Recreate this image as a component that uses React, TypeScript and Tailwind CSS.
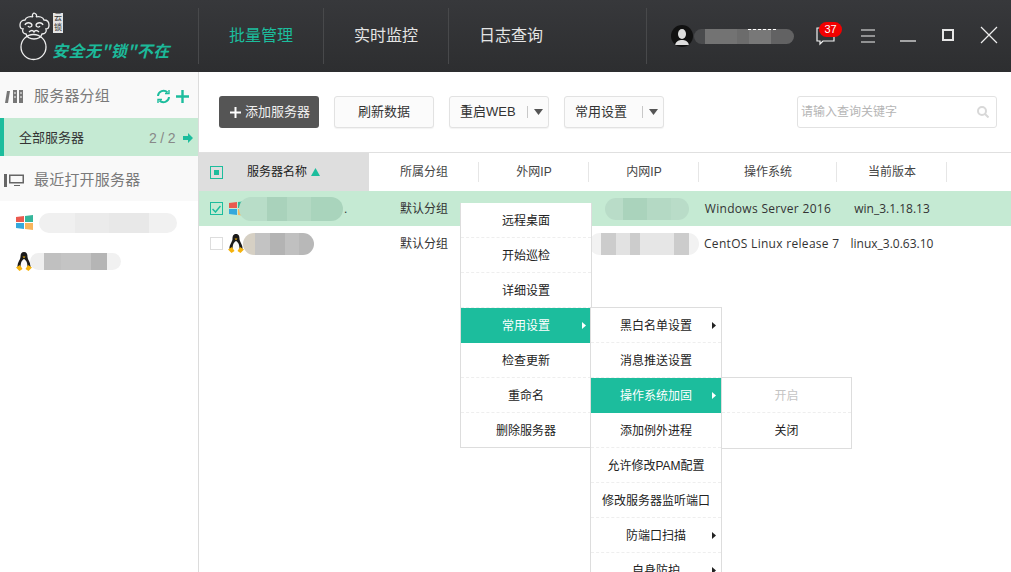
const font = "font-['Liberation_Sans','Noto_Sans_CJK_SC',sans-serif]";

const menu1 = ["远程桌面", "开始巡检", "详细设置", "常用设置", "检查更新", "重命名", "删除服务器"];
const menu2 = ["黑白名单设置", "消息推送设置", "操作系统加固", "添加例外进程", "允许修改PAM配置", "修改服务器监听端口", "防端口扫描", "自身防护"];
const menu2Arrows = ["黑白名单设置", "操作系统加固", "防端口扫描", "自身防护"];

function Logo() {
  return (
    <div className="relative w-[198px] h-full shrink-0">
      <svg className="absolute left-[18px] top-[12px]" width="34" height="49" viewBox="0 0 34 49" fill="none" stroke="#efefef" strokeWidth="1.3">
        <path d="M16 1c-2 1-2 3-1 4-3-1-7 0-8 3-3 0-5 2-5 5 0 2 1 4 3 4-1 2 0 5 3 5 1 3 4 5 8 5s7-2 8-5c3 0 5-2 4-5 2 0 3-2 3-4 0-3-2-5-5-5-1-3-5-4-8-3 1-1 1-3-2-4z" />
        <path d="M7 13c1-3 6-3 7 0 0 2-3 3-4 1M25 13c-1-3-6-3-7 0 0 2 3 3 4 1M11 20c2-2 4-2 5 0 1-2 3-2 5 0" />
        <circle cx="15.500" cy="35" r="12.500" />
      </svg>
      <div className={`absolute left-[53px] top-[13px] w-[10px] h-[20px] bg-[#e4e4e4] text-[#333] text-[8px] leading-[10px] text-center overflow-hidden ${font}`}>
        云锁
      </div>
      <div className="absolute left-[52px] top-[40px] text-[16px] leading-[20px] font-bold italic text-[#1cb99a] whitespace-nowrap tracking-[0.4px] font-['Noto_Sans_CJK_SC',sans-serif]">
        安全无"锁"不在
      </div>
    </div>
  );
}

function HeaderIcons() {
  return (
    <div className="flex items-center h-full">
      <div className="w-[22px] h-[22px] rounded-full bg-[#111] overflow-hidden ml-[24px] flex items-center justify-center shrink-0">
        <svg width="22" height="22" viewBox="0 0 22 22" fill="#ddd">
          <ellipse cx="11" cy="9" rx="4" ry="5" />
          <path d="M4 20c1-4 4-5 7-5s6 1 7 5z" />
        </svg>
      </div>
      <div className="relative flex w-[100px] h-[15px] ml-[1px] rounded-full overflow-hidden">
        <div className="w-[11px] bg-[#4a4b4d]" />
        <div className="w-[32px] bg-[#737373]" />
        <div className="w-[12px] bg-[#6c6c6c]" />
        <div className="w-[22px] bg-[#787878]" />
        <div className="w-[23px] bg-[#626263]" />
        <div className="absolute left-[54px] top-0 w-[28px] border-t border-dashed border-white" />
      </div>
      <div className="relative w-[24px] h-[24px] ml-[20px]">
        <svg className="absolute left-[2px] top-[3px]" width="20" height="20" viewBox="0 0 20 20" fill="none" stroke="#f2f2f2" strokeWidth="1.2">
          <path d="M1 1h17v13H7l-3 3v-3H1z" />
        </svg>
        <span className={`absolute left-[5px] top-[-2px] w-[23px] h-[15px] rounded-full bg-[#f20000] text-white text-[11px] leading-[15px] text-center ${font}`}>
          37
        </span>
      </div>
      <svg className="ml-[22px]" width="16" height="14" viewBox="0 0 16 14" stroke="#f2f2f2" strokeWidth="1.2">
        <path d="M1 1h14M1 7h14M1 13h14" />
      </svg>
      <svg className="ml-[24px] mt-[10px]" width="16" height="4" viewBox="0 0 16 4" stroke="#f2f2f2" strokeWidth="1.2">
        <path d="M0 2h16" />
      </svg>
      <svg className="ml-[26px] -mt-[2px]" width="12" height="12" viewBox="0 0 12 12" fill="none" stroke="#e6e6e6" strokeWidth="2">
        <rect x="1" y="1" width="10" height="10" />
      </svg>
      <svg className="ml-[26px] -mt-[2px]" width="18" height="18" viewBox="0 0 18 18" stroke="#eeeeee" strokeWidth="1.2">
        <path d="M1 1l16 16M17 1L1 17" />
      </svg>
    </div>
  );
}

function WinIcon() {
  return (
    <svg width="17" height="17" viewBox="0 0 17 17">
      <path d="M0 3l8-1v6H0z" fill="#ea5a4f" />
      <path d="M9 2l8-1v7H9z" fill="#35b69b" />
      <path d="M0 9h8v6l-8-1z" fill="#35a9dc" />
      <path d="M9 9h8v7l-8-1z" fill="#f8b55c" />
    </svg>
  );
}

function Penguin() {
  return (
    <svg width="16" height="19" viewBox="0 0 16 19" className="shrink-0">
      <path d="M8 0c3 0 3.500 2.500 3.500 5 0 2.500 3.500 6 3 10h-13c-.5-4 3-7.500 3-10C4.500 2.500 5 0 8 0z" fill="#1b1b1b" />
      <path d="M8 7c2.200 1 3.800 4.500 3.300 8H4.700C4.200 11.500 5.800 8 8 7z" fill="#fafafa" />
      <path d="M6.500 4.500h3L8 6.200z" fill="#f5b30d" />
      <path d="M0 15.500l4-2.500 2.500 4-3 2zM16 15.500L12 13l-2.500 4 3 2z" fill="#f5b30d" />
    </svg>
  );
}

function Smear({ blocks, h }: { blocks: [number, string][]; h: number }) {
  return (
    <div className="flex rounded-full overflow-hidden" style={{ height: h }}>
      {blocks.map(([w, c], i) => (
        <div key={i} style={{ width: w, background: c }} />
      ))}
    </div>
  );
}

function Sidebar() {
  return (
    <aside className="w-[199px] shrink-0 border-r border-[#dcdcdc] bg-white">
      <div className="h-[46px] bg-[#f9f9f9] flex items-center pl-[4px] pr-[9px] pt-[2px]">
        <svg width="21" height="15" viewBox="0 0 21 15" fill="#777">
          <path d="M3 2h3L4 14H1z" />
          <path d="M9 1h4v13H9zM15 1h4v13h-4z" />
          <path d="M10 4h2M10 8h2M16 4h2M16 8h2" stroke="#f9f9f9" />
        </svg>
        <span className="ml-[9px] text-[15px] text-[#7a7a7a] tracking-[0.2px]">服务器分组</span>
        <svg className="ml-auto" width="15" height="15" viewBox="0 0 15 15" fill="none" stroke="#1cbd9d" strokeWidth="2">
          <path d="M2 7a5.500 5.500 0 0 1 9.500-3.500M13 8a5.500 5.500 0 0 1-9.500 3.500" />
          <path d="M9 4.500h4V1M6 10.500H2V14" strokeWidth="1.400" />
        </svg>
        <svg className="ml-[5px]" width="13" height="13" viewBox="0 0 13 13" stroke="#1cbd9d" strokeWidth="2.400">
          <path d="M6.500 0v13M0 6.500h13" />
        </svg>
      </div>
      <div className="h-[38px] bg-[#c5ead3] border-l-[4px] border-[#1cbd9d] flex items-center pl-[15px] pr-[5px] pt-[2px]">
        <span className="text-[13px] text-[#333]">全部服务器</span>
        <span className="ml-auto text-[14px] text-[#888] tracking-[3.5px]">2/2</span>
        <svg className="ml-[4px]" width="10" height="10" viewBox="0 0 10 10" fill="#1cbd9d">
          <path d="M0 3h5V0l5 5-5 5V7H0z" />
        </svg>
      </div>
      <div className="h-[45px] bg-[#f9f9f9] flex items-center pl-[4px] pt-[4px]">
        <svg width="21" height="15" viewBox="0 0 21 15" fill="#666">
          <path d="M0 1h3v13H0z" />
          <path d="M5 1.500h15v9H5zM6.500 3v6h12V3zM10 12h6v1h-6z" fillRule="evenodd" />
        </svg>
        <span className="ml-[9px] text-[15px] text-[#7a7a7a] tracking-[0.2px]">最近打开服务器</span>
      </div>
      <div className="flex items-center h-[39px] pl-[16px] mt-[2px]">
        <WinIcon />
        <div className="ml-[6px]">
          <Smear h={20} blocks={[[36, "#f0f0f0"], [34, "#ebebeb"], [40, "#e8e8e8"], [28, "#f1f1f1"]]} />
        </div>
      </div>
      <div className="flex items-center h-[39px] pl-[16px]">
        <Penguin />
        <div className="-ml-[2px]">
          <Smear h={17} blocks={[[14, "#efefef"], [17, "#c0c0c0"], [30, "#c4c4c4"], [16, "#b5b5b5"], [14, "#f1f1f1"]]} />
        </div>
      </div>
    </aside>
  );
}

function DropBtn({ label }: { label: string }) {
  return (
    <div className="h-[32px] w-[100px] ml-[15px] rounded-[3px] border border-[#e2e2e2] bg-[#fbfbfb] flex items-center pl-[10px] shadow-[0_1px_1px_rgba(0,0,0,0.05)]">
      <span className="text-[13px] text-[#333]">{label}</span>
      <span className="ml-auto mr-[5px] h-[12px] border-l border-[#c8c8c8] pl-[6px] flex items-center">
        <svg width="9" height="6" viewBox="0 0 9 6" fill="#555">
          <path d="M0 0h9L4.500 6z" />
        </svg>
      </span>
    </div>
  );
}

function Toolbar() {
  return (
    <div className="h-[80px] flex items-center pl-[20px] pr-[14px]">
      <div className="h-[32px] w-[100px] rounded-[3px] bg-[#555] text-white flex items-center pl-[11px]">
        <svg width="11" height="11" viewBox="0 0 11 11" stroke="#fff" strokeWidth="2">
          <path d="M5.500 0v11M0 5.500h11" />
        </svg>
        <span className="ml-[4px] text-[13px] text-[#f0f0f0]">添加服务器</span>
      </div>
      <div className="h-[32px] w-[100px] ml-[15px] rounded-[3px] border border-[#e2e2e2] bg-[#fbfbfb] flex items-center justify-center text-[13px] text-[#333] shadow-[0_1px_1px_rgba(0,0,0,0.05)]">
        刷新数据
      </div>
      <DropBtn label="重启WEB" />
      <DropBtn label="常用设置" />
      <div className="ml-auto h-[32px] w-[200px] rounded-[3px] border border-[#e2e2e2] bg-white flex items-center pl-[3px] pr-[7px]">
        <span className="text-[12px] text-[#b5b5b5]">请输入查询关键字</span>
        <svg className="ml-auto" width="12" height="12" viewBox="0 0 12 12" fill="none" stroke="#d8d8d8" strokeWidth="2">
          <circle cx="5" cy="5" r="4" />
          <path d="M8 8l3.500 3.500" />
        </svg>
      </div>
    </div>
  );
}

const cols = [
  { label: "所属分组", w: "w-[110px]" },
  { label: "外网IP", w: "w-[110px]" },
  { label: "内网IP", w: "w-[110px]" },
  { label: "操作系统", w: "w-[138px]" },
  { label: "当前版本", w: "w-[110px]" },
];

function Table() {
  const latin = "font-['Open_Sans',sans-serif] text-[12px]";
  return (
    <div className="border-t border-[#e0e0e0]">
      <div className="flex h-[38px] items-center">
        <div className="w-[170px] h-full bg-[#dedede] flex items-center pl-[11px]">
          <div className="w-[13px] h-[13px] border border-[#1cbd9d] flex items-center justify-center">
            <div className="w-[5px] h-[5px] bg-[#1cbd9d]" />
          </div>
          <span className="ml-[24px] text-[12px] text-[#222]">服务器名称</span>
          <svg className="ml-[4px]" width="9" height="8" viewBox="0 0 9 8" fill="#1cbd9d">
            <path d="M4.500 0L9 8H0z" />
          </svg>
        </div>
        {cols.map((c) => (
          <div key={c.label} className={`${c.w} h-[20px] pl-[1px] flex items-center justify-center border-r border-[#e6e6e6] text-[12px] text-[#444]`}>
            {c.label}
          </div>
        ))}
      </div>

      <div className="flex h-[35px] items-center bg-[#c5ead3] text-[12px] text-[#333]">
        <div className="w-[170px] flex items-center pl-[11px]">
          <div className="w-[13px] h-[13px] border border-[#1cbd9d] flex items-center justify-center shrink-0">
            <svg width="9" height="8" viewBox="0 0 9 8" fill="none" stroke="#1cbd9d" strokeWidth="1.500">
              <path d="M0.500 4l3 3 5-6" />
            </svg>
          </div>
          <div className="ml-[6px] w-[16px] overflow-hidden shrink-0">
            <WinIcon />
          </div>
          <div className="-ml-[6px] shrink-0">
            <Smear h={24} blocks={[[28, "#b8ddc8"], [20, "#a9d2bb"], [24, "#b3d9c3"], [32, "#a9d4bc"]]} />
          </div>
          <span className="ml-[1px]">.</span>
        </div>
        <span className="w-[110px] pl-[31px]">默认分组</span>
        <div className="w-[110px]" />
        <div className="w-[110px] flex justify-center pl-[5px]">
          <Smear h={22} blocks={[[18, "#b9dcc8"], [24, "#aad3bc"], [24, "#b4d9c4"], [18, "#b9dcc8"]]} />
        </div>
        <span className={`w-[138px] text-center whitespace-nowrap tracking-[0.3px] ${latin}`}>Windows Server 2016</span>
        <span className={`w-[110px] text-center whitespace-nowrap ${latin}`}>win_3.1.18.13</span>
      </div>

      <div className="flex h-[35px] items-center text-[12px] text-[#333]">
        <div className="w-[170px] flex items-center pl-[11px]">
          <div className="w-[13px] h-[13px] border border-[#dddddd] shrink-0" />
          <div className="ml-[5px]">
            <Penguin />
          </div>
          <div className="-ml-[1px]">
            <Smear h={22} blocks={[[12, "#d6d0c4"], [15, "#c3c3c3"], [15, "#b3b3b3"], [14, "#c0c0c0"], [15, "#b8b8b8"]]} />
          </div>
        </div>
        <span className="w-[110px] pl-[31px]">默认分组</span>
        <div className="w-[110px]" />
        <div className="w-[110px] flex justify-center">
          <Smear h={22} blocks={[[12, "#f2f2f2"], [15, "#cccccc"], [15, "#e2e2e2"], [10, "#cccccc"], [35, "#e6e6e6"], [15, "#cccccc"], [10, "#f2f2f2"]]} />
        </div>
        <span className={`w-[138px] pl-[5px] whitespace-nowrap tracking-[0.3px] ${latin}`}>CentOS Linux release 7</span>
        <span className={`w-[110px] text-center whitespace-nowrap ${latin}`}>linux_3.0.63.10</span>
      </div>
    </div>
  );
}

function MenuRow({ label, active, arrow, disabled, last }: { label: string; active?: boolean; arrow?: boolean; disabled?: boolean; last?: boolean }) {
  return (
    <div
      className={`relative h-[35px] pt-[1px] flex items-center justify-center text-[12px] ${
        active ? "bg-[#1cbd9d] text-white" : disabled ? "text-[#c4c4c4]" : "text-[#222]"
      } ${last || active ? "" : "border-b border-dashed border-[#eeeeee]"}`}
    >
      {label}
      {arrow && (
        <svg className="absolute right-[5px] top-[14px]" width="4" height="7" viewBox="0 0 4 7" fill={active ? "#fff" : "#222"}>
          <path d="M0 0l4 3.500L0 7z" />
        </svg>
      )}
    </div>
  );
}

function Menus() {
  return (
    <>
      <div className="absolute left-[460px] top-[203px] w-[132px] h-[245px] bg-white border border-[#dddddd] border-t-0">
        {menu1.map((m, i) => (
          <MenuRow key={m} label={m} active={m === "常用设置"} arrow={m === "常用设置"} last={i === menu1.length - 1} />
        ))}
      </div>
      <div className="absolute left-[590px] top-[307px] w-[132px] h-[265px] overflow-hidden bg-white border border-[#dddddd] border-b-0">
        {menu2.map((m) => (
          <MenuRow key={m} label={m} active={m === "操作系统加固"} arrow={menu2Arrows.includes(m)} />
        ))}
      </div>
      <div className="absolute left-[721px] top-[377px] w-[131px] bg-white border border-[#dddddd]">
        <MenuRow label="开启" disabled />
        <MenuRow label="关闭" last />
      </div>
    </>
  );
}

export default function App() {
  return (
    <div className={`relative w-[1011px] h-[572px] overflow-hidden bg-white flex flex-col ${font}`}>
      <header className="h-[72px] shrink-0 flex bg-gradient-to-b from-[#37383b] to-[#2d2e30]">
        <Logo />
        <nav className="flex h-full items-center">
          {["批量管理", "实时监控", "日志查询"].map((t, i) => (
            <div key={t} className={`w-[125px] h-[56px] flex items-center justify-center text-[16px] border-l border-[#48494b] ${i === 0 ? "text-[#1cbd9d]" : "text-[#e4e4e4]"}`}>
              {t}
            </div>
          ))}
        </nav>
        <div className="ml-[73px] my-[8px] border-l border-[#48494b]" />
        <HeaderIcons />
      </header>
      <div className="flex flex-1 min-h-0">
        <Sidebar />
        <main className="flex-1 min-w-0">
          <Toolbar />
          <Table />
        </main>
      </div>
      <Menus />
    </div>
  );
}
